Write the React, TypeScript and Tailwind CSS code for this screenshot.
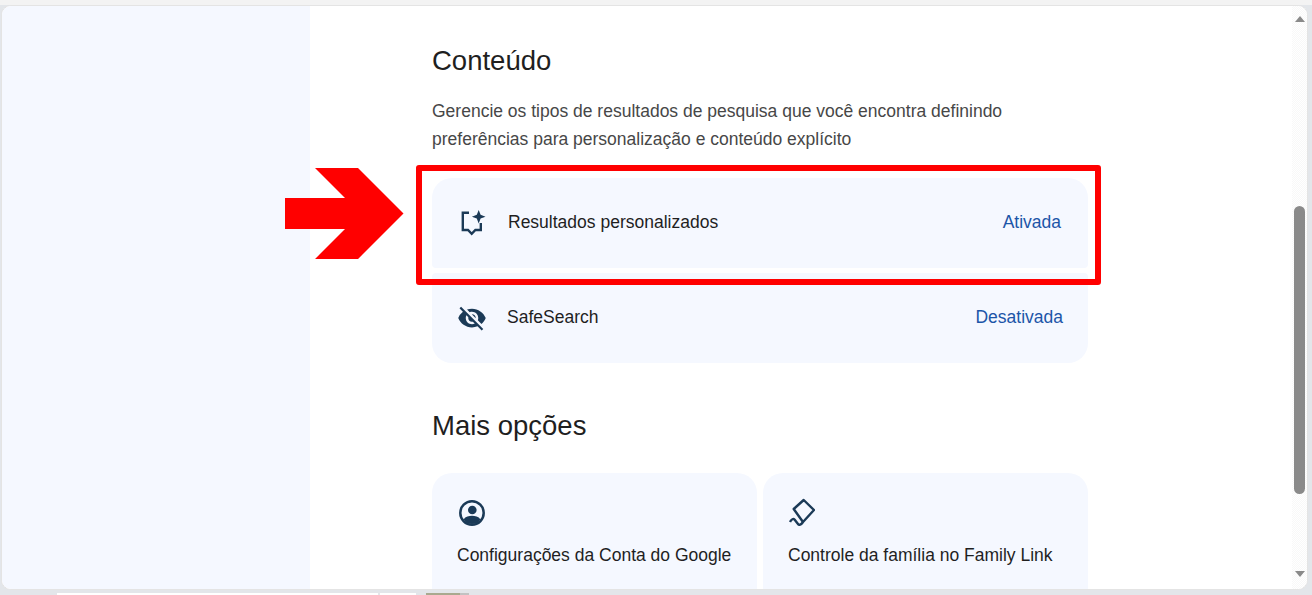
import { MdVisibilityOff } from "react-icons/md";

const cardBg = "bg-[#f5f8ff]";

function SparkleIcon() {
  return (
    <svg width="26" height="26" viewBox="0 0 26 26" fill="none">
      <path d="M9 2.8H2.800V20H8l3.700 3.800 3.700-3.800h5.400V13" stroke="#1b3a57" strokeWidth="2.400" />
      <path d="M18.700 0 20.600 4.800 25.500 6.700 20.600 8.600 18.700 13.400 16.800 8.600 11.900 6.700 16.800 4.800Z" fill="#1b3a57" />
    </svg>
  );
}

function AccountIcon() {
  return (
    <svg width="26" height="26" viewBox="0 0 26 26">
      <circle cx="13" cy="13" r="11.700" fill="none" stroke="#1b3a57" strokeWidth="2.500" />
      <circle cx="13.300" cy="10" r="4.300" fill="#1b3a57" />
      <path d="M4.500 19.500C6.500 16.500 10 15.800 13 15.800s6.500.7 8.500 3.700C19.500 22.600 16.500 24 13 24s-6.500-1.400-8.500-4.500Z" fill="#1b3a57" />
    </svg>
  );
}

function FamilyIcon() {
  return (
    <svg width="26" height="30" viewBox="0 0 26 30" fill="none" stroke="#1b3a57" strokeWidth="2.400" strokeLinejoin="round">
      <path d="M14.700 3 25 13 14 25 4.700 12Z" />
      <path d="M1 25C2.500 22 4.500 21.500 5.500 22.500L9 27C10 28.500 12 28 14 25" />
    </svg>
  );
}

function OptionCard({ icon, label }: { icon: React.ReactNode; label: string }) {
  return (
    <div className={`${cardBg} flex-1 h-[140px] rounded-t-[20px] pt-[27px] pl-[25px] text-[17.5px] text-[#1f1f1f]`}>
      <div className="h-[30px] mb-[13px]">{icon}</div>
      <div className="leading-[24px] whitespace-nowrap">{label}</div>
    </div>
  );
}

export default function App() {
  return (
    <div className="relative w-[1312px] h-[595px] overflow-hidden bg-[#e3e6ea] font-['Liberation_Sans',sans-serif]">
      <div className="h-[5px] bg-[#f3f3f3]" />
      <div className="ml-[1px] mr-[4px] h-[585px] rounded-[10px] overflow-hidden bg-white border border-[#e4e4e4] flex">
        <div className="w-[308px] shrink-0 bg-[#f5f8ff]" />
        <div className="flex-1 pl-[122px]">
          <div className="w-[656px]">
            <h2 className="mt-[38px] text-[27.5px] leading-[34px] text-[#1f1f1f]">Conteúdo</h2>
            <p className="mt-[20px] text-[17.5px] leading-[27.5px] text-[#474747]">
              Gerencie os tipos de resultados de pesquisa que você encontra definindo
              <br />
              preferências para personalização e conteúdo explícito
            </p>
            <div className="mt-[25px] flex flex-col gap-[5px]">
              <div className={`${cardBg} rounded-t-[20px] rounded-b-[4px] h-[90px] flex pl-[28px] pr-[27px] pt-[32px] text-[17.5px] text-[#1f1f1f]`}>
                <div className="w-[48px] shrink-0"><SparkleIcon /></div>
                <span className="flex-1 leading-[24px]">Resultados personalizados</span>
                <span className="text-[#1c55a8] leading-[24px]">Ativada</span>
              </div>
              <div className={`${cardBg} rounded-t-[4px] rounded-b-[20px] h-[90px] flex px-[25px] pt-[32px] text-[17.5px] text-[#1f1f1f]`}>
                <div className="w-[50px] shrink-0"><MdVisibilityOff size={30} color="#1b3a57" className="-mt-[2px]" /></div>
                <span className="flex-1 leading-[24px]">SafeSearch</span>
                <span className="text-[#1c55a8] leading-[24px]">Desativada</span>
              </div>
            </div>
            <h2 className="mt-[46px] text-[27.5px] leading-[34px] text-[#1f1f1f]">Mais opções</h2>
            <div className="mt-[30px] flex gap-[6px]">
              <OptionCard icon={<div className="ml-[2px]"><AccountIcon /></div>} label="Configurações da Conta do Google" />
              <OptionCard icon={<div className="ml-[1px] -translate-y-[3px]"><FamilyIcon /></div>} label="Controle da família no Family Link" />
            </div>
          </div>
        </div>
        <div className="w-[15px] shrink-0 flex flex-col items-center bg-[repeating-conic-gradient(#f8f8f8_0_25%,#ffffff_0_50%)] bg-[length:2px_2px]">
          <div className="mt-[10px] w-0 h-0 border-x-[5.5px] border-x-transparent border-b-[6px] border-b-[#8a8a8a]" />
          <div className="mt-[184px] w-[11px] h-[288px] rounded-full bg-[#8a8a8a]" />
          <div className="mt-[77px] w-0 h-0 border-x-[5.5px] border-x-transparent border-t-[6px] border-t-[#8a8a8a]" />
        </div>
      </div>
      <div className="mt-[3px] h-[2px] flex">
        <div className="w-[57px]" />
        <div className="w-[321px] bg-white" />
        <div className="w-[2px]" />
        <div className="w-[36px] bg-white" />
        <div className="w-[10px]" />
        <div className="w-[34px] bg-[#a9a98f]" />
        <div className="w-[9px] bg-[#c2c2c2]" />
      </div>
      <div className="absolute left-[416px] top-[165px] w-[685px] h-[120px] border-[6px] border-[#ff0000] rounded-[3px]" />
      <svg className="absolute left-[285px] top-[168px]" width="119" height="92" viewBox="0 0 119 92">
        <path d="M0 30H60L30 0H73L118.500 45.500 73 91H30L60 61H0Z" fill="#ff0000" />
      </svg>
    </div>
  );
}
